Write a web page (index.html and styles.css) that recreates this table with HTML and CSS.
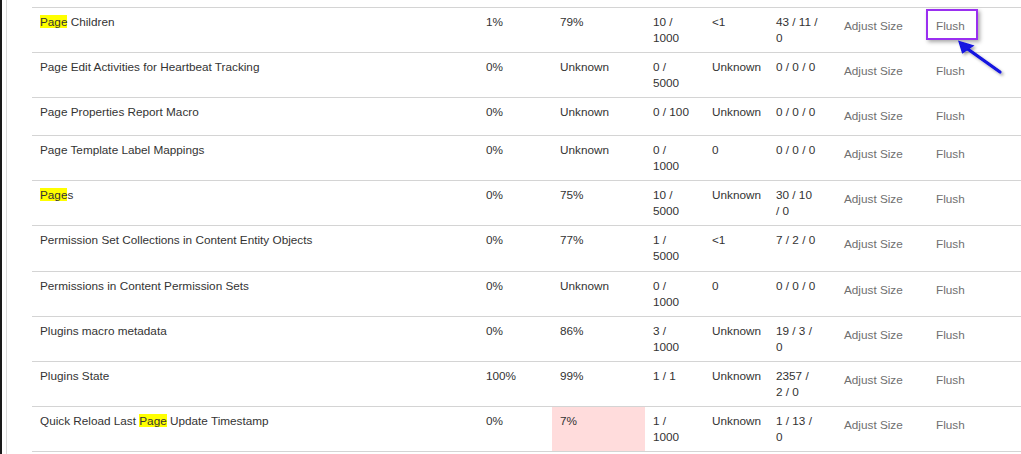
FILE: index.html
```html
<!DOCTYPE html>
<html lang="en">
<head>
<meta charset="utf-8">
<title>Cache statistics</title>
<link rel="stylesheet" href="styles.css">
</head>
<body>
<div class="page">
  <div class="frame">
    <div class="panel">
      <table class="cache-table">
        <colgroup>
          <col class="c-name"><col class="c-eff"><col class="c-hit"><col class="c-size"><col class="c-pct"><col class="c-stat"><col class="c-adj"><col class="c-flush">
        </colgroup>
        <tbody>
          <tr>
            <td><mark>Page</mark> Children</td><td>1%</td><td>79%</td><td>10 /<br>1000</td><td>&lt;1</td><td>43 / 11 /<br>0</td>
            <td><span class="act">Adjust Size</span></td><td><span class="act">Flush</span></td>
          </tr>
          <tr>
            <td>Page Edit Activities for Heartbeat Tracking</td><td>0%</td><td>Unknown</td><td>0 /<br>5000</td><td>Unknown</td><td>0 / 0 / 0</td>
            <td><span class="act">Adjust Size</span></td><td><span class="act">Flush</span></td>
          </tr>
          <tr>
            <td>Page Properties Report Macro</td><td>0%</td><td>Unknown</td><td>0 / 100</td><td>Unknown</td><td>0 / 0 / 0</td>
            <td><span class="act">Adjust Size</span></td><td><span class="act">Flush</span></td>
          </tr>
          <tr>
            <td>Page Template Label Mappings</td><td>0%</td><td>Unknown</td><td>0 /<br>1000</td><td>0</td><td>0 / 0 / 0</td>
            <td><span class="act">Adjust Size</span></td><td><span class="act">Flush</span></td>
          </tr>
          <tr>
            <td><mark>Page</mark>s</td><td>0%</td><td>75%</td><td>10 /<br>5000</td><td>Unknown</td><td>30 / 10<br>/ 0</td>
            <td><span class="act">Adjust Size</span></td><td><span class="act">Flush</span></td>
          </tr>
          <tr>
            <td>Permission Set Collections in Content Entity Objects</td><td>0%</td><td>77%</td><td>1 /<br>5000</td><td>&lt;1</td><td>7 / 2 / 0</td>
            <td><span class="act">Adjust Size</span></td><td><span class="act">Flush</span></td>
          </tr>
          <tr>
            <td>Permissions in Content Permission Sets</td><td>0%</td><td>Unknown</td><td>0 /<br>1000</td><td>0</td><td>0 / 0 / 0</td>
            <td><span class="act">Adjust Size</span></td><td><span class="act">Flush</span></td>
          </tr>
          <tr>
            <td>Plugins macro metadata</td><td>0%</td><td>86%</td><td>3 /<br>1000</td><td>Unknown</td><td>19 / 3 /<br>0</td>
            <td><span class="act">Adjust Size</span></td><td><span class="act">Flush</span></td>
          </tr>
          <tr>
            <td>Plugins State</td><td>100%</td><td>99%</td><td>1 / 1</td><td>Unknown</td><td>2357 /<br>2 / 0</td>
            <td><span class="act">Adjust Size</span></td><td><span class="act">Flush</span></td>
          </tr>
          <tr>
            <td>Quick Reload Last <mark>Page</mark> Update Timestamp</td><td>0%</td><td class="warn">7%</td><td>1 /<br>1000</td><td>Unknown</td><td>1 / 13 /<br>0</td>
            <td><span class="act">Adjust Size</span></td><td><span class="act">Flush</span></td>
          </tr>
        </tbody>
      </table>
    </div>
  </div>
  <div class="callout"></div>
  <svg class="arrow" width="60" height="50" viewBox="0 0 60 50" aria-hidden="true">
    <defs>
      <filter id="sh" x="-30%" y="-30%" width="160%" height="160%">
        <feDropShadow dx="2" dy="2" stdDeviation="1.5" flood-color="#000" flood-opacity="0.35"/>
      </filter>
    </defs>
    <g filter="url(#sh)">
      <line x1="50" y1="37" x2="17" y2="13.5" stroke="#1212e0" stroke-width="3.2" stroke-linecap="round"/>
      <polygon points="8,5.5 12.2,18.8 24.5,10.4" fill="#1212e0"/>
    </g>
  </svg>
</div>
</body>
</html>
```

FILE: styles.css
```css
html, body {
  margin: 0;
  padding: 0;
  background: #fff;
  overflow: hidden;
}

body {
  font-family: "Liberation Sans", Arial, sans-serif;
  font-size: 11.75px;
  color: #333;
}

.page {
  position: relative;
  width: 1021px;
  height: 454px;
}

.frame {
  height: 454px;
  border-left: 2px solid #1a1a1a;
  box-sizing: border-box;
}

.panel {
  margin-left: 4px;
  height: 100%;
  border-left: 1px solid #dadada;
  padding: 7px 0 0 25px;
  box-sizing: border-box;
}

.cache-table {
  border-collapse: collapse;
  table-layout: fixed;
  width: 989px;
}

.c-name { width: 446px; }
.c-eff { width: 74px; }
.c-hit { width: 93px; }
.c-size { width: 59px; }
.c-pct { width: 64px; }
.c-stat { width: 66px; }
.c-adj { width: 92px; }
.c-flush { width: 95px; }

.cache-table td {
  border-top: 1px solid #d4d4d4;
  border-bottom: 1px solid #d4d4d4;
  padding: 6px 8px 6.1px;
  line-height: 16px;
  vertical-align: top;
  white-space: nowrap;
}

.cache-table td.warn {
  background: #ffdcdc;
}

mark {
  background: #ffff00;
  color: inherit;
}

.act {
  display: block;
  padding: 4px 2px 5px;
  color: #6f6f6f;
}

.callout {
  position: absolute;
  left: 926px;
  top: 9px;
  width: 52px;
  height: 31px;
  box-sizing: border-box;
  border: 2px solid #9a2ff0;
  box-shadow: 2px 2px 4px rgba(0, 0, 0, 0.35);
}

.arrow {
  position: absolute;
  left: 950px;
  top: 35px;
}
```
